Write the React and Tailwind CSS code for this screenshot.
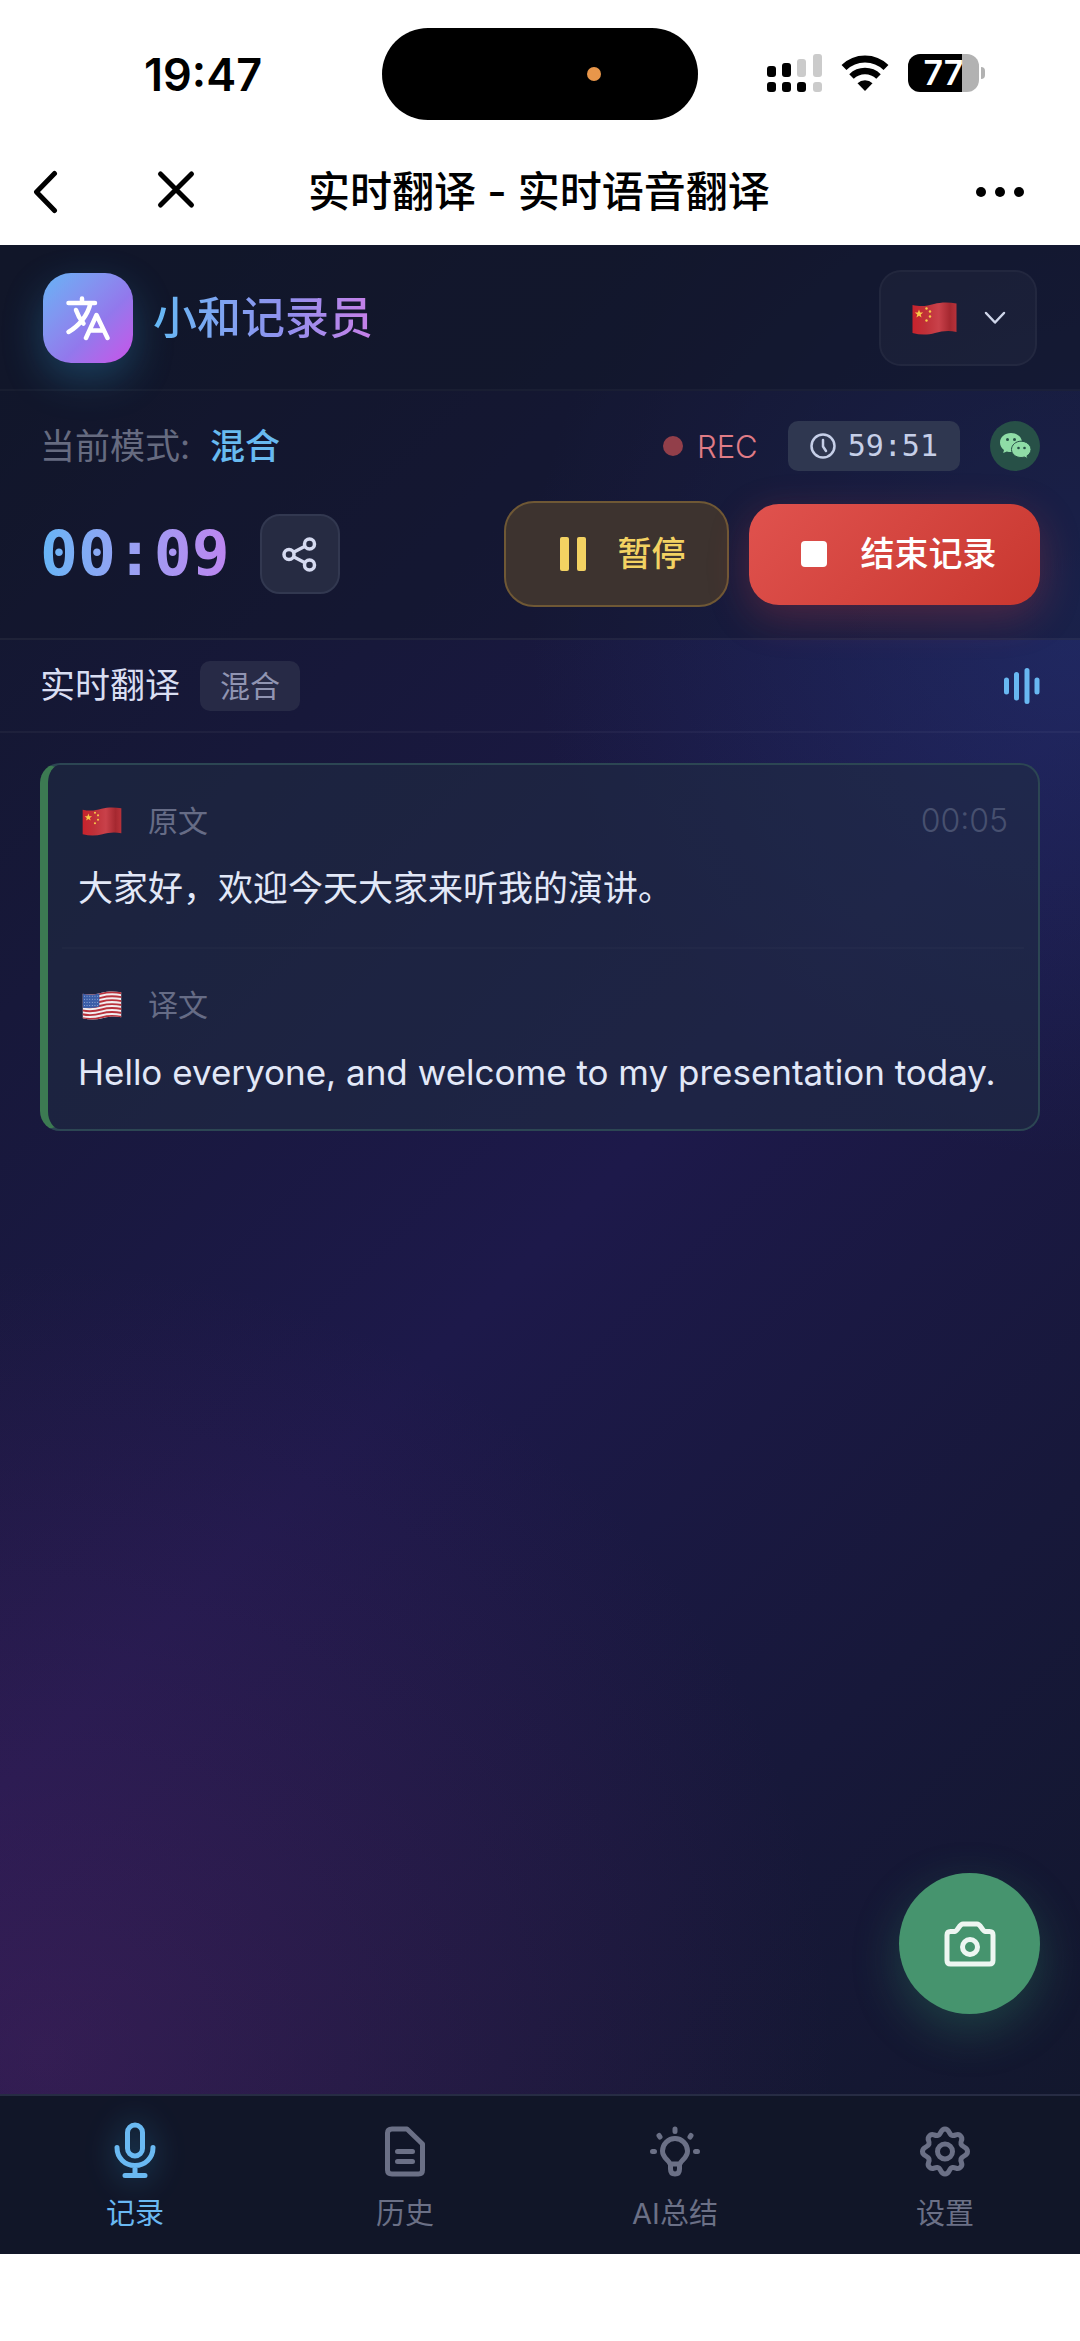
import React, { useState } from 'react';

const FlagCN = ({ className }) => (
  <svg className={className} viewBox="0 0 45 33" aria-hidden="true">
    <defs>
      <linearGradient id="cnShade" x1="0" x2="1">
        <stop offset="0" stopColor="#c8222c" />
        <stop offset="0.3" stopColor="#bf3139" />
        <stop offset="0.6" stopColor="#c9414a" />
        <stop offset="0.85" stopColor="#a52830" />
        <stop offset="1" stopColor="#b8323a" />
      </linearGradient>
    </defs>
    <path d="M0.5 3C9 5 15 4 22 2S37 0 44.5 1.5V30C37 28 30 29 23 31S8 33 0.5 31Z" fill="url(#cnShade)" />
    <path
      d="M7 7.5l1.1 3 3.1.1-2.5 1.9.9 3-2.6-1.8-2.6 1.8.9-3-2.5-1.9 3.1-.1z"
      fill="#f7c948"
    />
    <circle cx="14.5" cy="6.5" r="1.2" fill="#f7c948" />
    <circle cx="18" cy="9.5" r="1.2" fill="#f7c948" />
    <circle cx="18" cy="14.5" r="1.2" fill="#f7c948" />
    <circle cx="14.5" cy="18.5" r="1.2" fill="#f7c948" />
  </svg>
);

const FlagUS = ({ className }) => (
  <svg className={className} viewBox="0 0 45 33" aria-hidden="true">
    <defs>
      <clipPath id="usWave">
        <path d="M0.5 3C9 5 15 4 22 2S37 0 44.5 1.5V30C37 28 30 29 23 31S8 33 0.5 31Z" />
      </clipPath>
    </defs>
    <g clipPath="url(#usWave)">
      <rect width="45" height="33" fill="#f1eef0" />
      {[2, 6.5, 11, 15.5, 20, 24.5, 29].map((y) => (
        <path
          key={y}
          d={`M0 ${y + 2}C9 ${y + 4} 15 ${y + 3} 22 ${y + 1}S37 ${y - 1} 45 ${y + 0.5}`}
          stroke="#b8323c"
          strokeWidth="2.2"
          fill="none"
        />
      ))}
      <path d="M0 2C8 5 13 4.5 19.5 2.5V17.5C13 19 8 20 0 19Z" fill="#3b5ea8" />
      {[6, 9.5, 13, 16.5].map((y) => (
        <path key={y} d={`M2 ${y}H18`} stroke="#a9bbe2" strokeWidth="1" strokeDasharray="1 2" />
      ))}
    </g>
  </svg>
);

const flags = { cn: FlagCN, us: FlagUS };

const StatusBar = () => (
  <div className="grid h-[148px] grid-cols-[1fr_316px_1fr] items-center bg-white">
    <div className="pl-36 text-[45px] leading-none font-semibold">19:47</div>
    <div className="flex h-[92px] items-center justify-center rounded-full bg-black">
      <span className="ml-[108px] size-[14px] rounded-full bg-[#e8964a]" />
    </div>
    <div className="flex items-center pb-[3px] pl-[69px]">
      <svg className="h-[38px] w-[55px]" viewBox="0 0 55 38" aria-label="信号">
        <rect x="0" y="12" width="9" height="11" rx="3" />
        <rect x="15" y="9" width="9" height="14" rx="3" />
        <rect x="30" y="5" width="9" height="18" rx="3" fill="#cbcbcb" />
        <rect x="46" y="0" width="9" height="23" rx="3" fill="#cbcbcb" />
        <rect x="0" y="28" width="9" height="10" rx="3" />
        <rect x="15" y="28" width="9" height="10" rx="3" />
        <rect x="30" y="28" width="9" height="10" rx="3" />
        <rect x="46" y="28" width="9" height="10" rx="3" fill="#cbcbcb" />
      </svg>
      <svg className="ml-[19px] h-[36px] w-[48px]" viewBox="0 0 48 36" fill="none" stroke="#000" aria-label="无线网络">
        <path d="M3 12.5A30 30 0 0 1 45 12.5" strokeWidth="7" />
        <path d="M10.5 21.5A19.5 19.5 0 0 1 37.5 21.5" strokeWidth="6.5" />
        <path d="M24 36L16.5 28.2A11 11 0 0 1 31.5 28.2Z" fill="#000" stroke="none" />
      </svg>
      <div className="ml-[19px] flex h-[38px] w-[71px] items-center justify-center rounded-[12px] bg-linear-to-r from-black from-76% to-[#b2b2b2] to-76% text-[34px] leading-none font-semibold text-white">
        77
      </div>
      <span className="ml-[2px] h-[12px] w-[4px] rounded-r-full bg-[#b2b2b2]" />
    </div>
  </div>
);

const NavBar = () => (
  <nav className="flex h-[97px] items-center bg-white pr-[56px] pb-[10px] pl-[32px]">
    <button type="button" aria-label="返回" className="w-[124px]">
      <svg className="h-[44px] w-[28px]" viewBox="0 0 28 44" fill="none" stroke="#000" strokeWidth="5" strokeLinecap="round" strokeLinejoin="round">
        <path d="M22.5 3.5L4.5 22L22.5 40.5" />
      </svg>
    </button>
    <button type="button" aria-label="关闭" className="w-[100px]">
      <svg className="h-[44px] w-[40px]" viewBox="0 0 40 44" fill="none" stroke="#000" strokeWidth="5" strokeLinecap="round">
        <path d="M4.5 4L35.500 35M35.500 4L4.5 35" />
      </svg>
    </button>
    <h1 className="flex-1 pl-[52px] text-[42px] leading-none font-medium">实时翻译 - 实时语音翻译</h1>
    <button type="button" aria-label="更多">
      <svg className="h-[12px] w-[48px]" viewBox="0 0 48 12">
        <circle cx="5" cy="6" r="5" />
        <circle cx="24" cy="6" r="5" />
        <circle cx="43" cy="6" r="5" />
      </svg>
    </button>
  </nav>
);

const Header = () => (
  <header className="flex h-[146px] items-center justify-between border-b-2 border-white/3 bg-[#111729]/75 px-[43px] pt-[2px]">
    <div className="flex items-center gap-[20px]">
      <div className="flex size-[90px] items-center justify-center rounded-[28px] bg-linear-135 from-[#63b3f5] via-[#9278ec] via-60% to-[#c850e8] shadow-[0_16px_40px_rgba(56,189,248,0.25)]">
        <svg className="size-[46px]" viewBox="0 0 46 46" fill="none" stroke="#fff" strokeWidth="4.5" strokeLinecap="round" strokeLinejoin="round" aria-hidden="true">
          <path d="M3.5 8H30M17 3.5V8M25.5 8C23 20 14 31 3.5 37M11 15C13 21 15.5 25 18.5 28.5" />
          <path d="M21 43L31.5 20L42.5 43M25 35.5H38.5" />
        </svg>
      </div>
      <h2 className="bg-linear-to-r from-[#63b9f5] via-[#8f90ee] via-60% to-[#c77fe8] bg-clip-text text-[44px] leading-[60px] font-medium text-transparent">
        小和记录员
      </h2>
    </div>
    <button type="button" aria-label="选择语言" className="flex h-[96px] w-[158px] items-center justify-between rounded-[22px] border-2 border-white/4 bg-white/3 pr-[29px] pl-[31px]">
      <FlagCN className="h-[33px] w-[45px]" />
      <svg className="h-[14px] w-[22px]" viewBox="0 0 22 14" fill="none" stroke="#cfd6ea" strokeWidth="2.5" strokeLinecap="round" strokeLinejoin="round">
        <path d="M2 2L11 11.5L20 2" />
      </svg>
    </button>
  </header>
);

const Controls = () => {
  const [paused, setPaused] = useState(false);

  return (
    <section className="border-b-2 border-white/5 bg-[#111729]/40 px-[40px] pt-[30px] pb-[31px]">
      <div className="flex h-[50px] items-center justify-between">
        <p className="flex gap-[20px] text-[35px] leading-none text-[#666b80]">
          <span>当前模式:</span>
          <span className="font-medium text-[#68baf0]">混合</span>
        </p>
        <div className="flex items-center">
          <span className="size-[20px] rounded-full bg-[#923f4a]" />
          <span className="ml-[14px] text-[31px] leading-none font-light text-[#e07c86]">REC</span>
          <span className="ml-[30px] flex h-[50px] items-center gap-[12px] rounded-[10px] bg-[#2f3750] px-[22px] font-['DejaVu_Sans_Mono','Liberation_Mono',monospace] text-[30px] leading-none text-[#c6cfe8]">
            <svg className="size-[26px]" viewBox="0 0 26 26" fill="none" stroke="currentColor" strokeWidth="2.5" strokeLinecap="round" strokeLinejoin="round">
              <circle cx="13" cy="13" r="11.5" />
              <path d="M13 7V13.5L16 18" />
            </svg>
            59:51
          </span>
          <button type="button" aria-label="微信" className="ml-[30px] flex size-[50px] items-center justify-center rounded-full bg-[#275047]">
            <svg className="h-[26px] w-[31px]" viewBox="0 0 31 26" fill="#8fdca6">
              <path d="M11 0C5 0 0 4 0 9.5C0 12.5 1.6 15.2 4 17L3.2 20L6.8 18.4C8 18.8 9.5 19 11 19C17 19 22 15 22 9.5S17 0 11 0Z" />
              <path d="M21 8.2C15.8 8.2 11.5 12 11.5 16.5S15.8 24.5 21 24.5C22.2 24.5 23.3 24.3 24.4 24L27.6 25.6L27 22.8C29.4 21.3 31 19 31 16.5C31 12 26.5 8.2 21 8.2Z" stroke="#275047" strokeWidth="1" />
              <g fill="#275047">
                <circle cx="7.5" cy="6.5" r="1.5" />
                <circle cx="14.5" cy="6.5" r="1.5" />
                <circle cx="18.5" cy="15" r="1.3" />
                <circle cx="24.5" cy="15" r="1.3" />
              </g>
            </svg>
          </button>
        </div>
      </div>
      <div className="mt-[30px] flex items-center">
        <time className="bg-linear-to-r from-[#64b5f6] to-[#bd85f0] bg-clip-text font-['DejaVu_Sans_Mono','Liberation_Mono',monospace] text-[63px] leading-[80px] font-bold text-transparent">
          00:09
        </time>
        <button type="button" aria-label="分享" className="ml-[30px] flex size-[80px] items-center justify-center rounded-[20px] border-2 border-[#323850] bg-[#262b42]">
          <svg className="size-[35px]" viewBox="0 0 35 35" fill="none" stroke="#d5daf0" strokeWidth="3.5">
            <circle cx="7" cy="17.5" r="5" />
            <circle cx="27.5" cy="7" r="5" />
            <circle cx="27.5" cy="28" r="5" />
            <path d="M11.5 15.2L23 9.3M11.5 19.8L23 25.7" />
          </svg>
        </button>
        <button
          type="button"
          aria-pressed={paused}
          onClick={() => setPaused(!paused)}
          className="ml-auto flex h-[106px] w-[225px] items-center justify-center gap-[32px] rounded-[30px] border-2 border-[#6f5835] bg-[#3d332f] pl-[12px] text-[34px] leading-none font-medium text-[#f3d262]"
        >
          <svg className="h-[34px] w-[26px]" viewBox="0 0 26 34" fill="currentColor">
            <rect width="9" height="34" rx="2" />
            <rect x="17" width="9" height="34" rx="2" />
          </svg>
          暂停
        </button>
        <button type="button" className="ml-[20px] flex h-[101px] w-[291px] items-center justify-center gap-[34px] rounded-[30px] bg-linear-135 from-[#e0524e] to-[#c8372f] pl-[8px] text-[34px] leading-none font-medium text-white shadow-[0_12px_40px_rgba(239,68,68,0.25)]">
          <span className="size-[26px] rounded-[4px] bg-white" />
          结束记录
        </button>
      </div>
    </section>
  );
};

const entry = {
  time: '00:05',
  rows: [
    { flag: 'cn', label: '原文', text: '大家好，欢迎今天大家来听我的演讲。' },
    { flag: 'us', label: '译文', text: 'Hello everyone, and welcome to my presentation today.' },
  ],
};

const Transcript = () => (
  <>
    <div className="flex h-[93px] items-center justify-between border-b-2 border-white/4 px-[40px]">
      <div className="flex items-center gap-[20px]">
        <h3 className="text-[35px] leading-none text-[#d9def2]">实时翻译</h3>
        <span className="flex h-[50px] items-center rounded-[10px] bg-[#272a46] px-[20px] text-[30px] leading-none text-[#9094b2]">混合</span>
      </div>
      <svg className="size-[36px]" viewBox="0 0 36 36" stroke="#68b8f2" strokeWidth="5" strokeLinecap="round" aria-hidden="true">
        <path d="M2.5 12V24M12.5 6.5V30M23 2.5V33.5M33 12V24" />
      </svg>
    </div>
    <article className="mx-[40px] mt-[30px] rounded-[20px] border-2 border-l-8 border-[#2c4653] border-l-[#3c7a52] bg-[#1f2b42]/60">
      {entry.rows.map((row, index) => {
        const Flag = flags[row.flag];
        return (
          <div key={row.label} className={index === 0 ? 'mx-[14px] border-b-2 border-white/2 px-[16px] pt-[36px] pb-[34px]' : 'mx-[14px] px-[16px] pt-[36px] pb-[32px]'}>
            <div className="flex h-[40px] items-center text-[30px] leading-none text-[#666c86]">
              <Flag className="ml-[4px] h-[29px] w-[40px]" />
              <span className="ml-[26px]">{row.label}</span>
              {index === 0 && <time className="ml-auto text-[32px] font-light text-[#47506f]">{entry.time}</time>}
            </div>
            <p className="mt-[22px] text-[35px] leading-[50px] text-[#e2e8f8]">{row.text}</p>
          </div>
        );
      })}
    </article>
  </>
);

const tabs = [
  {
    label: '记录',
    icon: (
      <>
        <rect x="22.5" y="3" width="15" height="31" rx="7.5" />
        <path d="M12 25.5C12 36 20 43.5 30 43.5S48 36 48 25.5M30 43.5V53M20 53.5H40" />
      </>
    ),
  },
  {
    label: '历史',
    icon: (
      <>
        <path d="M17 7H32L47.5 22V48Q47.5 52 43.5 52H17Q12.5 52 12.5 48V11Q12.5 7 17 7Z" />
        <path d="M22.5 29.5H37.5M22.5 39.5H37.5" />
      </>
    ),
  },
  {
    label: 'AI总结',
    icon: (
      <>
        <path d="M25 42C24 38 17.5 36 17.5 29A12.5 12.5 0 0 1 42.5 29C42.5 36 36 38 35 42ZM25.5 42V47Q25.5 52 30 52T34.5 47V42" />
        <path d="M30 7V9.5M14 13.5L15 15M46 13.5L45 15M7.5 29.5H9.5M50.5 29.5H52.5" />
      </>
    ),
  },
  {
    label: '设置',
    icon: (
      <>
        <circle cx="30" cy="29.5" r="7.5" />
        <path d="M30 7C35 7 33.5 13 37.5 13.5C41 14 42.5 10.5 45.5 13.7C49 17 45 19 46 22C47.5 26 52.5 24.5 52.5 29.5S47.5 33 46 37C45 40 49 42 45.5 45.3C42.5 48.5 41 45 37.5 45.5C33.5 46 35 52 30 52S26.5 46 22.5 45.5C19 45 17.5 48.5 14.5 45.3C11 42 15 40 14 37C12.5 33 7.5 34.5 7.5 29.5S12.5 26 14 22C15 19 11 17 14.5 13.7C17.5 10.5 19 14 22.5 13.5C26.5 13 25 7 30 7Z" />
      </>
    ),
  },
];

const TabBar = ({ active, onSelect }) => (
  <nav className="grid h-[160px] grid-cols-4 border-t-2 border-[#272c44] bg-[#111628]">
    {tabs.map((tab, index) => (
      <button
        key={tab.label}
        type="button"
        onClick={() => onSelect(index)}
        className={
          index === active
            ? 'flex flex-col items-center pt-[26px] text-[29px] leading-[40px] text-[#6ab9f2]'
            : 'flex flex-col items-center pt-[26px] text-[29px] leading-[40px] text-[#6b7086]'
        }
      >
        <svg
          className={index === active ? 'size-[60px] drop-shadow-[0_0_16px_rgba(56,189,248,0.4)]' : 'size-[60px]'}
          viewBox="0 0 60 60"
          fill="none"
          stroke="currentColor"
          strokeWidth="5"
          strokeLinecap="round"
          strokeLinejoin="round"
          aria-hidden="true"
        >
          {tab.icon}
        </svg>
        <span className="mt-[12px]">{tab.label}</span>
      </button>
    ))}
  </nav>
);

const App = () => {
  const [active, setActive] = useState(0);

  return (
    <div className="flex min-h-screen flex-col bg-white pb-[87px] font-['Inter','Noto_Sans_CJK_SC',sans-serif] text-black">
      <StatusBar />
      <NavBar />
      <div className="flex flex-1 flex-col bg-[radial-gradient(circle_at_4%_90%,rgba(110,40,120,0.3),transparent_38%),radial-gradient(circle_at_100%_18%,rgba(37,64,135,0.4),transparent_28%),linear-gradient(135deg,#11172a_0%,#1d194a_50%,#11172a_100%)]">
        <Header />
        <Controls />
        <main className="flex flex-1 flex-col">
          <Transcript />
          <button type="button" aria-label="拍照" className="mt-auto mr-[40px] mb-[80px] flex size-[141px] items-center justify-center self-end rounded-full bg-[#46946e] shadow-[0_16px_48px_rgba(52,160,110,0.3)]">
            <svg className="h-[46px] w-[52px]" viewBox="0 0 52 46" fill="none" stroke="#eef6f2" strokeWidth="5" strokeLinejoin="round">
              <path d="M6.5 10.5H10.5C14 10.5 15 3 19 3H33C37 3 38 10.5 41.5 10.5H45.5Q49 10.5 49 14V39.5Q49 43 45.5 43H6.5Q3 43 3 39.5V14Q3 10.5 6.5 10.5Z" />
              <circle cx="26" cy="26" r="7.5" />
            </svg>
          </button>
        </main>
        <TabBar active={active} onSelect={setActive} />
      </div>
    </div>
  );
};

export default App;
